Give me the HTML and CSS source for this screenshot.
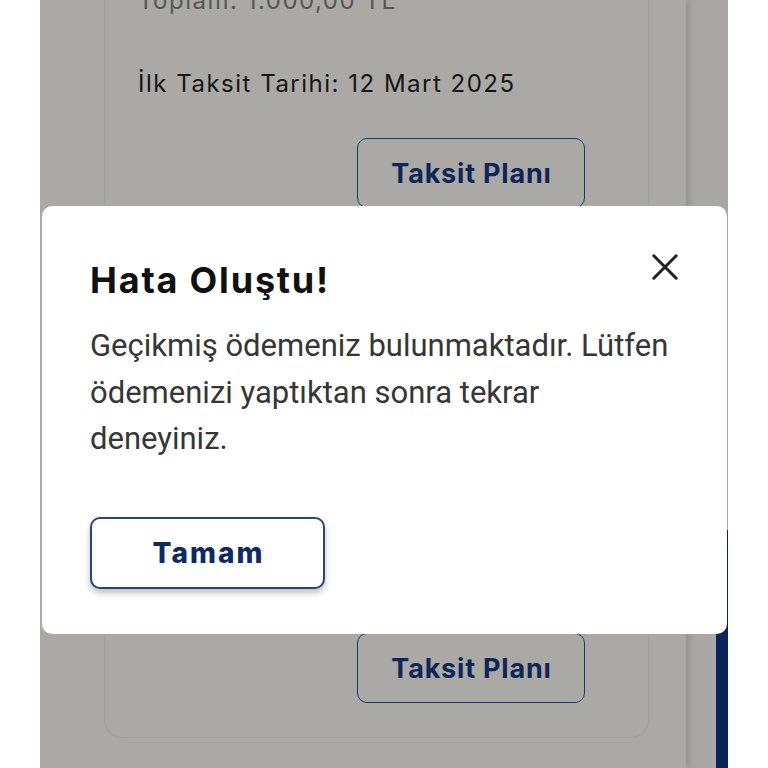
FILE: index.html
```html
<!DOCTYPE html>
<html lang="tr">
<head>
<meta charset="utf-8">
<title>Hata</title>
<link rel="stylesheet" href="styles.css">
</head>
<body>
<div class="screen">
  <div class="panel">
    <div class="card">
      <div class="installment">
        <p class="total">Toplam: 1.000,00 TL</p>
        <p class="date">İlk Taksit Tarihi: 12 Mart 2025</p>
        <div class="actions"><button class="plan-btn">Taksit Planı</button></div>
      </div>
      <div class="installment second">
        <p class="total">Toplam: 1.000,00 TL</p>
        <p class="date">İlk Taksit Tarihi: 12 Nisan 2025</p>
        <div class="actions"><button class="plan-btn">Taksit Planı</button></div>
      </div>
    </div>
  </div>
  <div class="side-bar"></div>
  <div class="modal" role="dialog">
    <div class="modal-head">
      <h2 class="modal-title">Hata Oluştu!</h2>
      <button class="close" aria-label="Kapat">
        <svg width="26" height="26" viewBox="0 0 26 26"><path d="M1.8 1.8 L24.2 24.2 M24.2 1.8 L1.8 24.2" stroke="#222" stroke-width="3" stroke-linecap="round" fill="none"/></svg>
      </button>
    </div>
    <p class="modal-text">Geçikmiş ödemeniz bulunmaktadır. Lütfen ödemenizi yaptıktan sonra tekrar deneyiniz.</p>
    <button class="ok-btn">Tamam</button>
  </div>
</div>
</body>
</html>
```
FILE: styles.css
```css
html, body {
  margin: 0;
  padding: 0;
  background: #ffffff;
}
.screen {
  position: relative;
  margin-left: 40px;
  width: 688px;
  height: 768px;
  background: #a8a7a4;
  overflow: hidden;
}
.panel {
  display: flow-root;
  width: 646px;
  height: 768px;
  background: #aaa9a6;
  box-shadow: 3px 0 8px rgba(0, 0, 0, 0.14);
  padding: 0 0 0 64px;
  box-sizing: border-box;
}
.card {
  width: 545px;
  box-sizing: border-box;
  margin-top: -120px;
  height: 858px;
  border: 1px solid #a2a19e;
  border-radius: 18px;
  padding: 0 63px 0 33px;
}
.installment p {
  margin: 0;
  font-family: "Inter", "Open Sans", sans-serif;
  font-size: 24px;
  line-height: 30px;
  letter-spacing: 1.5px;
}
.total {
  padding-top: 105px;
  color: #575755;
}
.installment .date {
  margin-top: 53px;
  color: #151515;
}
.actions {
  display: flex;
  justify-content: flex-end;
  margin-top: 39px;
}
.plan-btn {
  width: 228px;
  height: 70px;
  border: 1.5px solid #23386a;
  border-radius: 10px;
  background: transparent;
  font-family: "Inter", "Open Sans", sans-serif;
  font-weight: 700;
  font-size: 27px;
  letter-spacing: 0.8px;
  color: #0f2556;
  padding: 0 0 0 1px;
}
.second .total {
  padding-top: 80px;
}
.second .actions {
  margin-top: 232px;
}
.side-bar {
  position: absolute;
  left: 676px;
  top: 530px;
  width: 12px;
  height: 238px;
  background: #0c2358;
}
.modal {
  position: absolute;
  left: 2px;
  top: 206px;
  width: 685px;
  height: 428px;
  box-sizing: border-box;
  background: #ffffff;
  border-radius: 10px;
  padding: 52px 48px 0 48px;
}
.modal-head {
  display: flex;
  justify-content: space-between;
  align-items: flex-start;
}
.modal-title {
  margin: 0;
  font-family: "Inter", "Open Sans", sans-serif;
  font-weight: 700;
  font-size: 36px;
  line-height: 44px;
  letter-spacing: 1.8px;
  color: #111111;
}
.close {
  border: 0;
  background: transparent;
  padding: 0;
  margin: -4px 1px 0 0;
  width: 26px;
  height: 26px;
}
.close svg {
  display: block;
}
.modal-text {
  margin: 21px 0 0 0;
  max-width: 584px;
  font-family: "Roboto", sans-serif;
  font-size: 31px;
  line-height: 46.5px;
  color: #363636;
}
.ok-btn {
  display: block;
  margin-top: 54px;
  width: 235px;
  height: 72px;
  border: 2px solid #2b4480;
  border-radius: 10px;
  background: #ffffff;
  box-shadow: 0 4px 6px rgba(0, 0, 0, 0.25);
  font-family: "Inter", "Open Sans", sans-serif;
  font-weight: 800;
  font-size: 28px;
  letter-spacing: 2px;
  color: #0d2a66;
  padding: 0 0 0 2px;
}
```
